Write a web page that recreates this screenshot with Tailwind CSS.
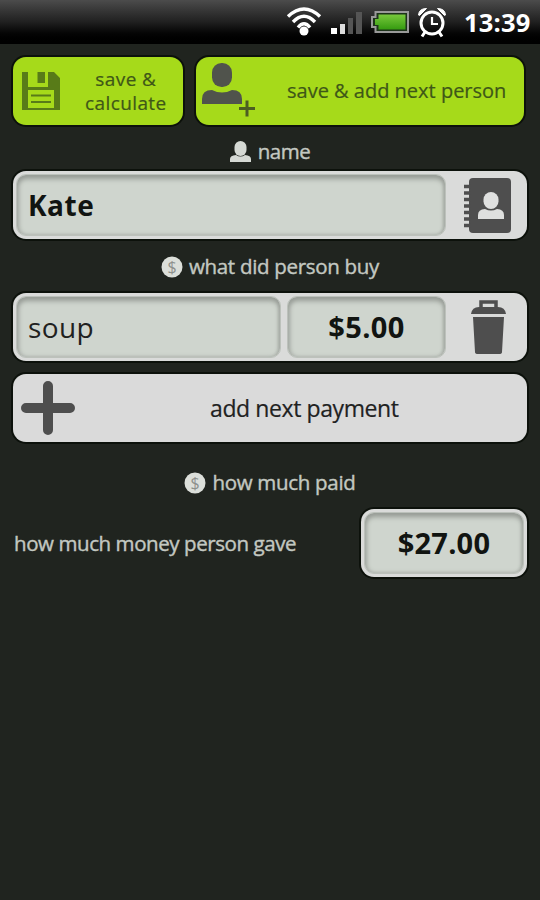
<!DOCTYPE html>
<html lang="en">
<head>
    <meta charset="UTF-8">
    <meta name="viewport" content="width=device-width, initial-scale=1.0">
    <title>Add person</title>
    <script src="https://cdn.jsdelivr.net/npm/@tailwindcss/browser@4"></script>
</head>
<body class="h-[900px] w-[540px] overflow-hidden bg-[#20241f] font-['Open_Sans','Noto_Sans',sans-serif] text-[#c3c8c1]">
    <!-- status bar -->
    <header class="flex h-[44px] items-center bg-linear-to-b from-[#4c4c4c] via-[#202020] to-black pl-[286px]">
        <svg class="h-[30px] w-[36px] shrink-0" viewBox="0 0 36 30" fill="none" stroke="#fff" stroke-width="3.400">
            <path d="M2 9.500Q18 -5.500 34 9.500M7 15Q18 3.500 29 15M12 20.500Q18 13 24 20.500"/>
            <circle cx="18" cy="24" r="4.500" fill="#fff" stroke="none"/>
        </svg>
        <div class="ml-[9px] flex h-[24px] items-end gap-[3px]">
            <div class="h-[6px] w-[6px] bg-white"></div>
            <div class="h-[10px] w-[5px] bg-[#ddd]"></div>
            <div class="h-[16px] w-[5px] bg-[#555]"></div>
            <div class="h-[22px] w-[6px] bg-[#555]"></div>
        </div>
        <svg class="ml-[8px] h-[24px] w-[40px] shrink-0" viewBox="0 0 40 24">
            <defs>
                <linearGradient id="charge" x1="0" y1="0" x2="0" y2="1">
                    <stop offset="0" stop-color="#78c93c"/>
                    <stop offset="1" stop-color="#359b10"/>
                </linearGradient>
            </defs>
            <path d="M5.500 2H38V22H5.500V17H2V7H5.500Z" fill="#1d331a" stroke="#999" stroke-width="2"/>
            <path d="M8.500 4.500H35.500V19.500H8.500V15H5V9H8.500Z" fill="url(#charge)"/>
        </svg>
        <svg class="ml-[7px] h-[32px] w-[30px] shrink-0" viewBox="0 0 30 32" fill="none" stroke="#fff" stroke-width="3">
            <circle cx="15" cy="17" r="11"/>
            <path d="M15 11V18H21" stroke-width="2.200"/>
            <path d="M8 26L5 30.500M22 26L25 30.500"/>
            <path d="M1.500 9Q2 2.500 9.500 2.500L2.500 9.500ZM28.500 9Q28 2.500 20.500 2.500L27.500 9.500Z" fill="#fff" stroke-width="1"/>
        </svg>
        <span class="ml-[17px] text-[25.500px] font-bold tracking-[0.2px] text-white">13:39</span>
    </header>

    <main class="px-[13px]">
        <div class="flex pt-[13px]">
            <button class="flex h-[68px] w-[170px] items-center rounded-[13px] bg-[#a6da1a] pl-[9px] text-[#3e5718] shadow-[0_0_0_2px_#0c110b]">
                <svg class="h-[38px] w-[38px] shrink-0" viewBox="0 0 38 38">
                    <path d="M0 0H6V15H26V0H32L38 6V38H0Z" fill="#587b18"/>
                    <path d="M15.500 0H23V11H15.500Z" fill="#587b18"/>
                    <path d="M6 18H32V36H6Z" fill="#a6da1a"/>
                    <path d="M9 23.500H29M9 30H29" stroke="#587b18" stroke-width="2.200"/>
                </svg>
                <span class="ml-[25px] text-center text-[19px] leading-[24px] tracking-[0.4px] [-webkit-text-stroke:0.2px]">save &amp;<br>calculate</span>
            </button>
            <button class="ml-[13px] flex h-[68px] w-[328px] items-center rounded-[13px] bg-[#a6da1a] pl-[6px] text-[#3e5718] shadow-[0_0_0_2px_#0c110b]">
                <svg class="h-[56px] w-[56px] shrink-0" viewBox="0 0 56 56" fill="#50534c">
                    <rect x="10" y="0" width="20" height="24" rx="9.500"/>
                    <path d="M0 41V36Q0 27 10 27Q20 32 30 27Q40 27 40 36V41Z"/>
                    <path d="M37 45.500H53M45 37.500V53.500" stroke="#4c5e22" stroke-width="3"/>
                </svg>
                <span class="ml-[29px] text-[20px] whitespace-nowrap [-webkit-text-stroke:0.2px]">save &amp; add next person</span>
            </button>
        </div>

        <div class="flex h-[46px] items-center justify-center gap-[7px] pt-[8px] text-[20.500px] tracking-[-0.5px]">
            <svg class="h-[22px] w-[21px]" viewBox="0 0 21 22" fill="#d5d9d4">
                <rect x="4.500" y="0" width="12" height="15" rx="6"/>
                <path d="M0 21V18Q0 14.500 6 14Q10.500 17 15 14Q21 14.500 21 18V21Z"/>
            </svg>
            <span class="pb-[2px] [-webkit-text-stroke:0.4px]">name</span>
        </div>

        <div class="flex h-[68px] w-[514px] items-center rounded-[13px] bg-[#dadbda] p-[3px] shadow-[0_0_0_2px_#0c110b]">
            <div class="flex h-[62px] w-[430px] items-center rounded-[10px] border border-[#bcc1bb] bg-[#cfd5ce] pl-[11px] text-[28px] font-bold tracking-[0.5px] text-[#111411] shadow-[inset_0_4px_5px_#989d97,inset_2px_0_4px_#b0b5af,inset_-2px_0_3px_#b5bab4]">Kate</div>
            <svg class="ml-[18px] h-[55px] w-[47px]" viewBox="0 0 47 55" fill="#4e4e4e">
                <rect x="5" y="0" width="42" height="55" rx="4"/>
                <path d="M0 8.500H7M0 15H7M0 21.500H7M0 28H7M0 34.500H7M0 41H7M0 47.500H7" stroke="#4e4e4e" stroke-width="3.500"/>
                <rect x="19.500" y="14" width="15" height="17" rx="7.500" fill="#dfe0df"/>
                <path d="M14 41V37Q14 31.500 21 31Q27 34 33 31Q40 31.500 40 37V41Z" fill="#dfe0df"/>
            </svg>
        </div>

        <div class="flex h-[54px] items-center justify-center gap-[6px] pt-[2px] text-[20.500px] tracking-[-0.3px]">
            <svg class="h-[22px] w-[22px]" viewBox="0 0 22 22">
                <circle cx="11" cy="11" r="10.500" fill="#dcdfda"/>
                <text x="11" y="16.500" text-anchor="middle" font-size="16" fill="#8d908c">$</text>
            </svg>
            <span class="pb-[2px] [-webkit-text-stroke:0.4px]">what did person buy</span>
        </div>

        <div class="flex h-[68px] w-[514px] items-center rounded-[13px] bg-[#dadbda] p-[3px] shadow-[0_0_0_2px_#0c110b]">
            <div class="flex h-[62px] w-[265px] items-center rounded-[10px] border border-[#bcc1bb] bg-[#cfd5ce] pl-[11px] text-[28px] tracking-[0.4px] text-[#1f221f] shadow-[inset_0_4px_5px_#989d97,inset_2px_0_4px_#b0b5af,inset_-2px_0_3px_#b5bab4]">soup</div>
            <div class="ml-[6px] flex h-[62px] w-[159px] items-center justify-center rounded-[10px] border border-[#bcc1bb] bg-[#cfd5ce] text-[29px] font-bold tracking-[0.4px] text-[#111411] shadow-[inset_0_4px_5px_#989d97,inset_2px_0_4px_#b0b5af,inset_-2px_0_3px_#b5bab4]">$5.00</div>
            <svg class="ml-[25px] h-[55px] w-[35px]" viewBox="0 0 35 55" fill="#4e4e4e">
                <path d="M10 8V2H25V8" fill="none" stroke="#4e4e4e" stroke-width="3.500"/>
                <path d="M0 14Q1 7 8 7H27Q34 7 35 14Z"/>
                <path d="M2 17H33L31 52Q31 54 28 54H7Q4 54 4 52Z"/>
            </svg>
        </div>

        <button class="mt-[13px] flex h-[68px] w-[514px] items-center rounded-[13px] bg-[#dadada] pl-[8px] text-[#1f221f] shadow-[0_0_0_2px_#0c110b]">
            <svg class="h-[54px] w-[54px] shrink-0" viewBox="0 0 54 54">
                <path d="M5 27H49M27 5V49" stroke="#4e4e4e" stroke-width="10" stroke-linecap="round"/>
            </svg>
            <span class="ml-[135px] text-[23px] tracking-[-0.4px] whitespace-nowrap [-webkit-text-stroke:0.2px]">add next payment</span>
        </button>

        <div class="flex h-[67px] items-center justify-center gap-[6px] pt-[14px] text-[20.500px] tracking-[-0.3px]">
            <svg class="h-[22px] w-[22px]" viewBox="0 0 22 22">
                <circle cx="11" cy="11" r="10.500" fill="#dcdfda"/>
                <text x="11" y="16.500" text-anchor="middle" font-size="16" fill="#8d908c">$</text>
            </svg>
            <span class="[-webkit-text-stroke:0.4px]">how much paid</span>
        </div>

        <div class="flex w-[514px] items-center justify-between">
            <span class="pl-[1px] text-[20.500px] tracking-[-0.42px] [-webkit-text-stroke:0.4px]">how much money person gave</span>
            <div class="h-[68px] w-[166px] rounded-[13px] bg-[#dadbda] p-[3px] shadow-[0_0_0_2px_#0c110b]">
                <div class="flex h-[62px] items-center justify-center rounded-[10px] border border-[#bcc1bb] bg-[#cfd5ce] text-[29px] font-bold tracking-[0.2px] text-[#111411] shadow-[inset_0_4px_5px_#989d97,inset_2px_0_4px_#b0b5af,inset_-2px_0_3px_#b5bab4]">$27.00</div>
            </div>
        </div>
    </main>
</body>
</html>
